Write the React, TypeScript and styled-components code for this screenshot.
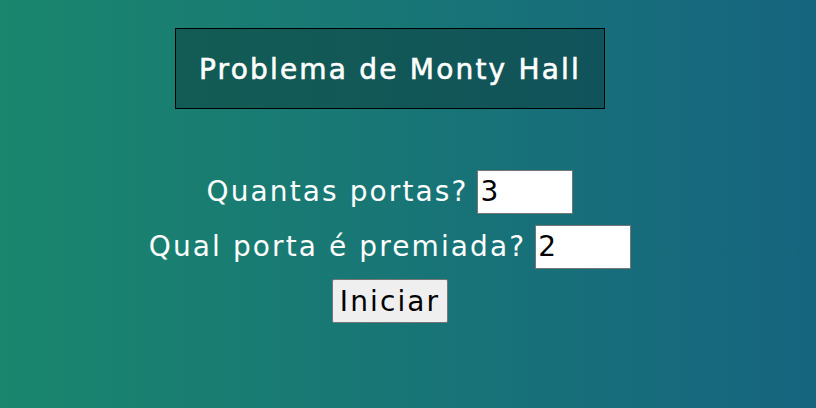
import styled, { createGlobalStyle } from "styled-components";

const GlobalStyle = createGlobalStyle`
  html, body {
    margin: 0;
    height: 100%;
  }

  body {
    background: linear-gradient(to right, #1a866d, #16657f);
    font-family: "DejaVu Sans", "Open Sans", sans-serif;
    letter-spacing: 2.1px;
    color: #ffffff;
  }
`;

const Page = styled.main`
  width: 780px;
  padding-top: 28px;
  display: flex;
  flex-direction: column;
  align-items: center;
`;

const Title = styled.h1`
  margin: 0;
  width: 430px;
  height: 81px;
  box-sizing: border-box;
  display: flex;
  align-items: center;
  justify-content: center;
  padding-top: 2px;
  background: rgba(10, 50, 50, 0.45);
  border: 1px solid #000000;
  font-size: 28px;
  font-weight: 400;
  letter-spacing: 2.2px;
  -webkit-text-stroke: 0.6px #ffffff;
`;

const Form = styled.form`
  margin-top: 60px;
  display: flex;
  flex-direction: column;
  align-items: center;
  gap: 10px;
`;

const Row = styled.label`
  display: flex;
  align-items: center;
  gap: 9px;
  font-size: 28px;
  height: 45px;
`;

const NumberInput = styled.input`
  width: 96px;
  height: 44px;
  box-sizing: border-box;
  border: 1px solid #767676;
  padding: 0 2px;
  font-family: inherit;
  font-size: 28px;
  color: #000000;
  background: #ffffff;
`;

const StartButton = styled.button`
  height: 44px;
  padding: 0 7px;
  font-family: inherit;
  font-size: 28px;
  letter-spacing: 2.1px;
  color: #000000;
  background: #efefef;
  border: 1px solid #767676;
  border-radius: 2px;
`;

export default function App() {
  return (
    <>
      <GlobalStyle />
      <Page>
        <Title>Problema de Monty Hall</Title>
        <Form onSubmit={(e) => e.preventDefault()}>
          <Row>
            Quantas portas?
            <NumberInput type="text" defaultValue="3" />
          </Row>
          <Row>
            Qual porta é premiada?
            <NumberInput type="text" defaultValue="2" />
          </Row>
          <StartButton type="submit">Iniciar</StartButton>
        </Form>
      </Page>
    </>
  );
}
